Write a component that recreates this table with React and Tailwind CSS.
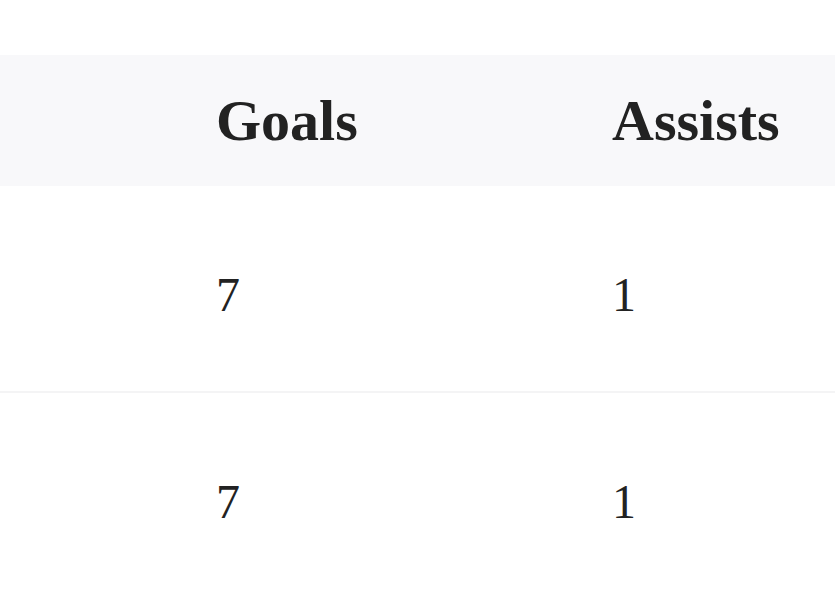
export default function App() {
  const rows = [
    { goals: 7, assists: 1 },
    { goals: 7, assists: 1 },
  ];

  return (
    <div className="min-h-screen bg-white pt-[55px] text-[#222222]" style={{ fontFamily: '"Liberation Serif", "DejaVu Serif", serif' }}>
      <div className="grid h-[131px] grid-cols-[216px_396px_1fr] items-center bg-[#f8f8fa]">
        <div />
        <div className="text-[58px] font-bold leading-none">Goals</div>
        <div className="text-[58px] font-bold leading-none">Assists</div>
      </div>
      {rows.map((r, i) => (
        <div
          key={i}
          className="grid h-[207px] grid-cols-[216px_396px_1fr] items-center border-b-2 border-[#f4f4f5]"
        >
          <div />
          <div className="pt-[12px] text-[48px] leading-none">{r.goals}</div>
          <div className="pt-[12px] text-[48px] leading-none">{r.assists}</div>
        </div>
      ))}
    </div>
  );
}
